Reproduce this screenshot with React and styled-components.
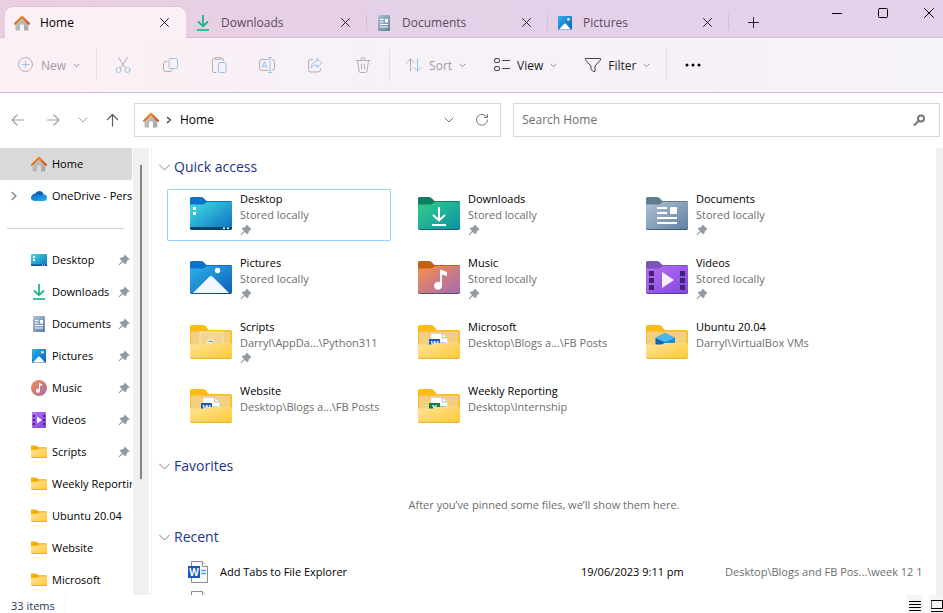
import { useState } from 'react'
import styled, { createGlobalStyle, css } from 'styled-components'

const GlobalStyle = createGlobalStyle`
  * {
    box-sizing: border-box;
  }

  body {
    margin: 0;
    background: #fff;
    color: #000;
    font-family: 'Open Sans', 'Noto Sans', sans-serif;
    font-size: 12px;
    line-height: 16px;
  }

  button,
  input {
    margin: 0;
    padding: 0;
    border: none;
    background: none;
    color: inherit;
    font: inherit;
  }

  svg {
    display: block;
    flex: none;
  }
`

const Window = styled.div`
  display: flex;
  flex-direction: column;
  height: 100vh;
  overflow: hidden;
`

/* Title bar */

const TitleBar = styled.header`
  display: flex;
  align-items: flex-end;
  justify-content: space-between;
  height: 38px;
  flex: none;
  padding-left: 5px;
  background: linear-gradient(90deg, #ebcfe0, #e4d1e8 45%, #e3d1ea);
  box-shadow: inset 0 -1px #d8bfdb;
`

const Tabs = styled.div`
  display: flex;
`

const Tab = styled.div`
  display: flex;
  align-items: center;
  gap: 10px;
  position: relative;
  width: 181px;
  height: 31px;
  padding: 0 13px 0 9px;
  color: #5c4b60;

  ${(props) =>
    props.$active
      ? css`
          border-radius: 8px 8px 0 0;
          background: #faf0f6;
          color: #000;
          box-shadow: 0 -1px 1px #dcc0d8;
        `
      : css`
          &::after {
            content: '';
            position: absolute;
            right: 0;
            top: 7px;
            height: 16px;
            border-right: 1px solid #d4bfd8;
          }
        `}
`

const TabLabel = styled.span`
  flex: 1;
`

const TabClose = styled.button`
  display: grid;
  place-items: center;
  width: 18px;
  height: 18px;
  color: #2b2030;
`

const NewTab = styled.button`
  display: grid;
  place-items: center;
  width: 48px;
  height: 31px;
  color: #2b2030;
`

const WindowControls = styled.div`
  display: flex;
  align-self: flex-start;
  margin-right: -9px;
`

const WindowButton = styled.button`
  display: grid;
  place-items: center;
  width: 46px;
  height: 26px;
`

/* Command bar */

const CommandBar = styled.div`
  display: flex;
  align-items: center;
  height: 55px;
  flex: none;
  padding-left: 4px;
  border-bottom: 1px solid #d5bedb;
  background: linear-gradient(90deg, #fbf0f5, #f7f1f8 45%, #f6f2f9);
`

const Command = styled.button`
  display: flex;
  align-items: center;
  gap: 7px;
  height: 32px;
  padding: 0 14px;
  color: ${(props) => (props.disabled ? '#a29ba3' : '#1b1b1b')};
`

const CommandLabel = styled.span`
  padding-top: 2px;
`

const IconCommand = styled.button`
  display: grid;
  place-items: center;
  width: 48px;
  height: 32px;
`

const Separator = styled.span`
  width: 1px;
  height: 32px;
  margin: 0 2px;
  background: #e5dde6;
`

/* Address row */

const AddressRow = styled.div`
  display: flex;
  align-items: center;
  gap: 12px;
  height: 55px;
  flex: none;
  padding: 0 3px 1px 10px;
`

const NavButtons = styled.nav`
  display: grid;
  grid-template-columns: 36px 32px 28px 16px;
  width: 112px;
`

const NavButton = styled.button`
  height: 24px;
  color: ${(props) => (props.$strong ? '#5c5c5c' : '#a0a0a0')};
`

const AddressBox = styled.div`
  display: flex;
  align-items: center;
  flex: 6;
  height: 34px;
  padding: 0 11px 0 8px;
  border: 1px solid #d9d9d9;
`

const Crumb = styled.a`
  flex: 1;
  color: inherit;
  text-decoration: none;
`

const CrumbArrow = styled.span`
  display: grid;
  place-items: center;
  width: 21px;
`

const BoxButton = styled.button`
  display: grid;
  place-items: center;
  width: 14px;
  height: 24px;
  margin-left: 19px;
  color: #757575;
`

const SearchBox = styled.label`
  display: flex;
  align-items: center;
  flex: 7;
  height: 34px;
  padding: 0 13px 0 8px;
  border: 1px solid #d9d9d9;
`

const SearchInput = styled.input`
  flex: 1;
  min-width: 0;
  outline: none;

  &::placeholder {
    color: #6d6d6d;
    opacity: 1;
  }
`

/* Body */

const Body = styled.div`
  display: flex;
  flex: 1;
  min-height: 0;
  font-size: 11px;
`

const Sidebar = styled.nav`
  width: 132px;
  flex: none;
  overflow: hidden;
`

const SideItem = styled.button`
  display: flex;
  align-items: center;
  width: 100%;
  height: 32px;
  padding-right: ${(props) => (props.$pinned ? '2px' : '0')};
  border-radius: 0 2px 2px 0;
  background: ${(props) => (props.$active ? '#d9d9d9' : 'none')};
  text-align: left;
`

const SideArrow = styled.span`
  display: grid;
  place-items: center;
  width: 27px;
  flex: none;
  margin-right: 4px;
  color: #858585;
`

const SideLabel = styled.span`
  flex: 1;
  margin-left: 5px;
  overflow: hidden;
  white-space: nowrap;
`

const SideDivider = styled.hr`
  height: 1px;
  margin: 16px 8px 15px 7px;
  border: none;
  background: #d4d4d4;
`

const ScrollTrack = styled.div`
  display: flex;
  justify-content: center;
  width: ${(props) => (props.$edge ? '7px' : '16px')};
  flex: none;
  margin-left: ${(props) => (props.$edge ? '0' : '1px')};
  padding-top: 17px;
  background: #f0f0f0;
`

const ScrollThumb = styled.div`
  width: 2px;
  height: 73%;
  background: #858585;
`

const Content = styled.main`
  flex: 1;
  min-width: 0;
  margin-left: 2px;
  padding-top: 3px;
  border-left: 1px solid #f2f2f2;
  overflow: hidden;
`

const SectionTitle = styled.h2`
  display: flex;
  align-items: center;
  gap: 4px;
  height: 32px;
  margin: 0;
  padding-left: 7px;
  color: #1e3287;
  font-size: 14px;
  font-weight: 400;
  line-height: 20px;
`

const Tiles = styled.div`
  display: grid;
  grid-template-columns: repeat(auto-fill, 224px);
  gap: 12px 4px;
  padding: 6px 0 17px 15px;
`

const Tile = styled.button`
  display: flex;
  gap: 7px;
  height: 52px;
  padding: 1px 0 0 22px;
  border: 1px solid ${(props) => (props.$selected ? '#99d1ff' : 'transparent')};
  border-radius: 1px;
  text-align: left;
  white-space: nowrap;
`

const TileIcon = styled.span`
  padding-top: 5px;
`

const TileText = styled.span`
  display: flex;
  flex-direction: column;
`

const Muted = styled.span`
  color: #6d6d6d;
`

const PinSlot = styled.span`
  padding-top: 1px;
`

const EmptyNote = styled.p`
  margin: 0;
  padding: 15px 0 8px;
  color: #6d6d6d;
  text-align: center;
`

const RecentTable = styled.table`
  width: 100%;
  margin-top: 4px;
  border-collapse: collapse;
  table-layout: fixed;
  white-space: nowrap;
`

const RecentCell = styled.td`
  width: ${(props) => props.$width || 'auto'};
  height: 30px;
  padding: 0;
  color: ${(props) => (props.$muted ? '#6d6d6d' : '#000')};
`

const FileName = styled.span`
  display: flex;
  align-items: center;
  gap: 12px;
  padding-left: 36px;
`

/* Status bar */

const StatusBar = styled.footer`
  display: flex;
  align-items: center;
  height: 18px;
  flex: none;
  color: #1e395b;
  font-size: 11px;
`

const StatusCount = styled.span`
  width: 66px;
  padding: 3px 0 0 11px;
  line-height: 15px;
  border-right: 1px solid #f2f2f2;
`

const ViewSwitch = styled.div`
  display: flex;
  gap: 6px;
  margin: 0 -2px 0 auto;
`

const ViewButton = styled.button`
  display: grid;
  place-items: center;
  width: 16px;
  height: 18px;
  padding-top: 3px;
  background: #f5f5f5;
`

/* Icons */

const gradients = {
  roof: ['#f59a1b', '#d5460e'],
  wall: ['#c9c9c9', '#a6a6a6'],
  desktop: ['#3fe0e0', '#0f6cc4'],
  downloads: ['#33cc8c', '#0a93a5'],
  documents: ['#afc2d8', '#5f7f9f'],
  pictures: ['#2fb1ec', '#0a5fb8'],
  music: ['#f9904b', '#a468b4'],
  videos: ['#b76df5', '#8246e0'],
  yellow: ['#ffe59a', '#ffc830'],
  cloud: ['#0a6ac0', '#29b0f2'],
}

function Gradients() {
  return (
    <svg width="0" height="0" style={{ position: 'absolute' }} aria-hidden="true">
      <defs>
        {Object.entries(gradients).map(([id, [from, to]]) => (
          <linearGradient key={id} id={id} x1="0" y1="0" x2="1" y2="1">
            <stop stopColor={from} />
            <stop offset="1" stopColor={to} />
          </linearGradient>
        ))}
      </defs>
    </svg>
  )
}

function Line({ w = 16, h = w, d, color = 'currentColor', width = 1, children }) {
  return (
    <svg width={w} height={h} viewBox={`0 0 ${w} ${h}`} fill="none" stroke={color} strokeWidth={width} strokeLinecap="round" strokeLinejoin="round" aria-hidden="true">
      {d && <path d={d} />}
      {children}
    </svg>
  )
}

const SmallChevron = () => <Line w={7} color="#8f8a90" d="M1 2.200L3.500 4.700L6 2.200" />
const TitleChevron = () => <Line w={11} color="#858585" d="M.5 3L5.500 8L10.500 3" />
const Cross = ({ size = 10 }) => <Line w={size} d={`M.5 .5L${size - 0.5} ${size - 0.5}M${size - 0.5} .5L.5 ${size - 0.5}`} />

function HomeIcon() {
  return (
    <svg width="16" height="16" viewBox="0 0 16 16" aria-hidden="true">
      <path d="M8 2L14.300 8V14.600Q14.300 15.500 13.400 15.500H10V10.500Q10 9.500 9 9.500H7Q6 9.500 6 10.500V15.500H2.300Q1.500 15.500 1.500 14.600V8Z" fill="url(#wall)" />
      <path d="M1 8.800L8 1.700L15 8.800" fill="none" stroke="url(#roof)" strokeWidth="2" strokeLinecap="round" strokeLinejoin="round" />
    </svg>
  )
}

function PinIcon() {
  return (
    <svg width="12" height="12" viewBox="0 0 12 12" fill="#929ba3" aria-hidden="true">
      <path d="M6.600 .5L11.500 5.200L10.300 6.200L9.200 6.500L8.300 9.500L7.200 10.300L4.800 7.900L1.400 11.200L.7 11.100L.7 10.400L4 7L1.700 4.800L2.500 3.800L5.500 3Z" />
    </svg>
  )
}

function SmallIcon({ kind }) {
  return (
    <svg width="16" height="16" viewBox="0 0 16 16" aria-hidden="true">
      {kind === 'desktop' && (
        <>
          <rect y="2" width="16" height="12" rx="1" fill="url(#desktop)" />
          <path d="M0 12.500H16V13Q16 14 15 14H1Q0 14 0 13Z" fill="#0b4f80" />
          <path d="M2 4h2v2H2zM2 7h2v2H2zM11 12.700h1v1h-1zM13 12.700h1v1h-1z" fill="#fff" />
        </>
      )}
      {kind === 'downloads' && (
        <>
          <path d="M8 0V11M3 6.500L8 11.200L13 6.500" fill="none" stroke="#1fb48f" strokeWidth="1.800" />
          <path d="M2 15H14" stroke="#1fbe8c" strokeWidth="1.800" />
        </>
      )}
      {kind === 'documents' && (
        <>
          <rect x="2" width="12" height="16" rx="1" fill="url(#documents)" />
          <path d="M4 4.500H7.500M4 7H7.500M4 9.500H12M4 12H12" stroke="#fff" strokeWidth="1.200" />
          <path d="M9 4h3v3.500H9z" fill="#fff" />
        </>
      )}
      {kind === 'pictures' && (
        <>
          <rect x="1" y="1" width="14" height="14" rx="1" fill="url(#pictures)" />
          <path d="M2 14.500L7.200 8.800Q8 8 8.800 8.800L14 14.500Z" fill="#fff" />
          <circle cx="11.500" cy="4.300" r="1.300" fill="#fff" />
        </>
      )}
      {kind === 'music' && (
        <>
          <circle cx="8" cy="8" r="8" fill="url(#music)" />
          <path d="M8 3L11 4.300V6L9 5.300V10.500A2 2 0 1 1 8 9Z" fill="#fff" />
        </>
      )}
      {kind === 'videos' && (
        <>
          <rect x="1" width="14" height="16" rx="1" fill="url(#videos)" />
          <path d="M2 3h2v2H2zM2 7h2v2H2zM2 11h2v2H2zM12 3h2v2h-2zM12 7h2v2h-2zM12 11h2v2h-2z" fill="#43267e" />
          <path d="M6 4.500L11 8L6 11.500Z" fill="#fff" />
        </>
      )}
      {kind === 'folder' && (
        <>
          <path d="M0 2.500Q0 1.500 1 1.500H5.500L7.500 3.300H15Q16 3.300 16 4.300V8H0Z" fill="#f5ad0c" />
          <path d="M0 6H6L8 4.400H16V13Q16 14 15 14H1Q0 14 0 13Z" fill="url(#yellow)" />
          <path d="M.5 13.500H15.500" stroke="#e6a91f" strokeWidth=".8" />
        </>
      )}
      {kind === 'cloud' && (
        <>
          <path d="M4 11Q1 11 1 8.500Q1.200 6 4 5.800Q5.500 3 8.300 3Q11.500 3 12.500 6L12 9Z" fill="#0a5fb4" />
          <path d="M4.500 6.500Q7 5.500 9 7.500L13 6.200Q16 7 16 9.800Q15.800 13 12.800 13H3.800Q0 12.800 0 9.600Q.3 6.800 3.500 6.300Z" fill="url(#cloud)" />
        </>
      )}
    </svg>
  )
}

const tabColors = {
  desktop: '#0a72cc',
  pictures: '#0a72cc',
  downloads: '#0b7f5f',
  documents: '#5f7d8c',
  music: '#c2620f',
  videos: '#7c55b8',
}

function ColorFolder({ kind }) {
  return (
    <svg width="43" height="36" viewBox="0 0 43 36" aria-hidden="true">
      <path d="M0 2.500Q0 1 1.500 1H11Q13 1 14.500 3L16.500 5H41Q42 5 42 6.500V14H0Z" fill={tabColors[kind]} />
      <path d="M0 8.500H12.500Q14 8.500 15 7.500L17 6H42V32Q42 34 40 34H2Q0 34 0 32Z" fill={`url(#${kind})`} />
      <path d="M.3 32.200Q.6 33.500 2 33.500H40Q41.400 33.500 41.700 32.200" fill="none" stroke="#12355b" strokeOpacity=".6" />
      {kind === 'desktop' && (
        <>
          <path d="M0 31H42V32Q42 34 40 34H2Q0 34 0 32Z" fill="#0b4568" />
          <path d="M3 11h3v3H3zM3 16h3v3H3zM33 31.500h2v1.500h-2zM37 31.500h2v1.500h-2z" fill="#fff" />
        </>
      )}
      {kind === 'downloads' && <path d="M21 11V24M15 19L21 24.500L27 19M14 29H28" fill="none" stroke="#fff" strokeWidth="2" />}
      {kind === 'documents' && (
        <>
          <path d="M11 12H21M11 17H21M11 22H31M11 27H31" stroke="#fff" strokeWidth="2" />
          <rect x="24" y="11" width="7" height="7" rx="1" fill="#fff" />
        </>
      )}
      {kind === 'pictures' && (
        <>
          <path d="M3 33L19 17Q21 15 23 17L39 33Z" fill="#f0f7ff" />
          <circle cx="27.500" cy="10.500" r="2.700" fill="#fff" />
        </>
      )}
      {kind === 'music' && <path d="M22 9.500L29 12V16L24 14.500V26A4 4 0 1 1 22 22.300Z" fill="#fff" />}
      {kind === 'videos' && (
        <>
          <path d="M3 11h5v5H3zM3 18h5v5H3zM3 25h5v5H3zM34 11h5v5h-5zM34 18h5v5h-5zM34 25h5v5h-5z" fill="#3d2470" />
          <path d="M16 12L28 20L16 28Z" fill="#f4effa" />
        </>
      )}
    </svg>
  )
}

function YellowFolder({ inside }) {
  const letter = inside === 'excel' ? 'X' : 'W'
  return (
    <svg width="43" height="36" viewBox="0 0 43 36" aria-hidden="true">
      <path d="M0 3Q0 1 2 1H13Q15 1 16 2.500L18.500 6H40Q42 6 42 8V24H0Z" fill="#fcbb17" />
      <path d="M1 9Q1 7.500 2.500 7.500H40.500V24H1Z" fill="#f3cf80" />
      {inside === 'script' && (
        <>
          <path d="M10 8h23v14H10z" fill="#f4d591" stroke="#f9e3b4" />
          <circle cx="20.500" cy="18.500" r="3.200" fill="#f5f5f5" />
          <path d="M18.500 17.500l2.500-.5 2 1.500" fill="none" stroke="#54708c" />
        </>
      )}
      {(inside === 'word' || inside === 'excel') && (
        <>
          <path d="M13 9.500H24.500L29.500 14V24H13Z" fill="#fff" stroke="#c9cdd3" strokeWidth=".6" />
          <path d="M24.500 9.500V14H29.500" fill="none" stroke="#b4bac1" />
          <path d="M21 19.500H28" stroke={inside === 'excel' ? '#2a8f58' : '#6c9ddc'} strokeWidth="2" />
          <rect x="11" y="15" width="11" height="9" rx=".5" fill={inside === 'excel' ? '#107c41' : '#185abd'} />
          <text x="16.500" y="23" fill="#fff" fontSize="8" fontWeight="700" textAnchor="middle">
            {letter}
          </text>
        </>
      )}
      {inside === 'box' && (
        <>
          <path d="M9.500 14L19 9L29 14V22H9.500Z" fill="#0a62b5" />
          <path d="M9.500 14L19 9L29 14L19 18.500Z" fill="#45b9f4" />
          <path d="M19 18.500L29 14V22H15Z" fill="#1b8be0" />
        </>
      )}
      <path d="M0 20.500H15.500L18.500 19H42V33Q42 35 40 35H2Q0 35 0 33Z" fill="url(#yellow)" />
      <path d="M.5 33Q.8 34.500 2 34.500H40Q41.200 34.500 41.500 33" fill="none" stroke="#e4ab32" strokeWidth=".8" />
    </svg>
  )
}

function WordIcon() {
  return (
    <svg width="20" height="24" viewBox="0 0 20 24" aria-hidden="true">
      <path d="M3.500 1.500H14.500L19.500 6.500V22.500H3.500Z" fill="#fafafa" stroke="#8c8c8c" />
      <path d="M14.500 1.500V6.500H19.500" fill="#fff" stroke="#8c8c8c" />
      <path d="M13 10.500H18M13 13.500H18" stroke="#54a0ea" strokeWidth="1.500" />
      <rect y="6" width="12" height="12" fill="#185abd" />
      <text x="6" y="16" fill="#fff" fontSize="10" fontWeight="700" textAnchor="middle">
        W
      </text>
    </svg>
  )
}

const tabs = ['Home', 'Downloads', 'Documents', 'Pictures']

const places = [
  { label: 'Desktop', icon: 'desktop', pinned: true },
  { label: 'Downloads', icon: 'downloads', pinned: true },
  { label: 'Documents', icon: 'documents', pinned: true },
  { label: 'Pictures', icon: 'pictures', pinned: true },
  { label: 'Music', icon: 'music', pinned: true },
  { label: 'Videos', icon: 'videos', pinned: true },
  { label: 'Scripts', icon: 'folder', pinned: true },
  { label: 'Weekly Reporting', icon: 'folder' },
  { label: 'Ubuntu 20.04', icon: 'folder' },
  { label: 'Website', icon: 'folder' },
  { label: 'Microsoft', icon: 'folder' },
]

const folders = [
  { name: 'Desktop', path: 'Stored locally', kind: 'desktop', pinned: true },
  { name: 'Downloads', path: 'Stored locally', kind: 'downloads', pinned: true },
  { name: 'Documents', path: 'Stored locally', kind: 'documents', pinned: true },
  { name: 'Pictures', path: 'Stored locally', kind: 'pictures', pinned: true },
  { name: 'Music', path: 'Stored locally', kind: 'music', pinned: true },
  { name: 'Videos', path: 'Stored locally', kind: 'videos', pinned: true },
  { name: 'Scripts', path: 'Darryl\\AppDa...\\Python311', inside: 'script', pinned: true },
  { name: 'Microsoft', path: 'Desktop\\Blogs a...\\FB Posts', inside: 'word' },
  { name: 'Ubuntu 20.04', path: 'Darryl\\VirtualBox VMs', inside: 'box' },
  { name: 'Website', path: 'Desktop\\Blogs a...\\FB Posts', inside: 'word' },
  { name: 'Weekly Reporting', path: 'Desktop\\Internship', inside: 'excel' },
]

function Commands() {
  const grey = '#b5adb6'
  const blue = '#94c4ea'
  return (
    <CommandBar>
      <Command disabled>
        <Line color={grey}>
          <circle cx="7.500" cy="7.500" r="7" />
          <path d="M7.500 4V11M4 7.500H11" stroke={blue} />
        </Line>
        <CommandLabel>New</CommandLabel>
        <SmallChevron />
      </Command>
      <Separator />
      <IconCommand disabled aria-label="Cut">
        <Line color={grey} d="M3.500 .5L10.500 11M12.500 .5L5.500 11">
          <circle cx="3.500" cy="13" r="2.500" stroke={blue} />
          <circle cx="12.500" cy="13" r="2.500" stroke={blue} />
        </Line>
      </IconCommand>
      <IconCommand disabled aria-label="Copy">
        <Line color={grey} d="M4 4.500H3Q.5 4.500 .5 7V12Q.5 14.500 3 14.500H7Q9 14.500 9.500 12.500">
          <rect x="6" y="1.500" width="8.500" height="10" rx="2" stroke={blue} />
        </Line>
      </IconCommand>
      <IconCommand disabled aria-label="Paste">
        <Line color={grey} d="M5 15.500H3Q1.500 15.500 1.500 14V3Q1.500 1.500 3 1.500H4.500M10 1.500H11Q12.500 1.500 12.500 3V4M5 .5H9.500V2.500H5Z">
          <rect x="7.500" y="5.500" width="7.500" height="10" rx="1.500" stroke={blue} />
        </Line>
      </IconCommand>
      <IconCommand disabled aria-label="Rename">
        <Line color={grey} d="M9 13.500H3Q.5 13.500 .5 11V5Q.5 2.500 3 2.500H9M13 2.500Q15.500 2.500 15.500 5V11Q15.500 13.500 13 13.500">
          <path d="M3 11L5.500 4.500L8 11M4 9H7M11 .5V15.500M9.500 .5H12.500M9.500 15.500H12.500" stroke={blue} />
        </Line>
      </IconCommand>
      <IconCommand disabled aria-label="Share">
        <Line color={grey} d="M6 2.500H4Q1.500 2.500 1.500 5V12.500Q1.500 15 4 15H11Q13.500 15 13.500 12.500V11.500">
          <path d="M10 1.500L15 6L10 10.500V8Q6 8 4 11Q4.500 5 10 4Z" stroke={blue} />
        </Line>
      </IconCommand>
      <IconCommand disabled aria-label="Delete">
        <Line color={grey} d="M1 3.500H15M2.500 3.500L4 14Q4.200 15.500 5.500 15.500H10.500Q11.800 15.500 12 14L13.500 3.500M6 3V2Q6 .8 7 .8H9Q10 .8 10 2V3M6.500 7V12M9.500 7V12" />
      </IconCommand>
      <Separator />
      <Command disabled>
        <Line color={grey} d="M4.500 14V2M.5 6L4.500 2L8.500 6">
          <path d="M11.500 2V14M7.500 10L11.500 14L15.500 10" stroke={blue} />
        </Line>
        <CommandLabel>Sort</CommandLabel>
        <SmallChevron />
      </Command>
      <Command>
        <Line d="M8.500 3.500H15.500M8.500 11.500H15.500" color="#444">
          <rect x=".5" y="1.500" width="5" height="4" rx="1.500" />
          <rect x=".5" y="9.500" width="5" height="4" rx="1.500" />
        </Line>
        <CommandLabel>View</CommandLabel>
        <SmallChevron />
      </Command>
      <Command>
        <Line d="M.5 1.500H15.500V3L10 9V14.500H8.500L6 12.500V9L.5 3Z" color="#444" />
        <CommandLabel>Filter</CommandLabel>
        <SmallChevron />
      </Command>
      <Separator />
      <IconCommand aria-label="See more">
        <svg width="18" height="4" viewBox="0 0 18 4" aria-hidden="true">
          <circle cx="3" cy="2" r="1.500" />
          <circle cx="9" cy="2" r="1.500" />
          <circle cx="15" cy="2" r="1.500" />
        </svg>
      </IconCommand>
    </CommandBar>
  )
}

function App() {
  const [activeTab, setActiveTab] = useState('Home')
  const [selected, setSelected] = useState('Desktop')
  const [search, setSearch] = useState('')

  return (
    <Window>
      <GlobalStyle />
      <Gradients />
      <TitleBar>
        <Tabs role="tablist">
          {tabs.map((tab) => (
            <Tab key={tab} role="tab" aria-selected={tab === activeTab} $active={tab === activeTab} onClick={() => setActiveTab(tab)}>
              {tab === 'Home' ? <HomeIcon /> : <SmallIcon kind={tab.toLowerCase()} />}
              <TabLabel>{tab}</TabLabel>
              <TabClose aria-label={`Close ${tab}`}>
                <Cross size={9} />
              </TabClose>
            </Tab>
          ))}
          <NewTab aria-label="New tab">
            <Line w={11} d="M5.500 .5V10.500M.5 5.500H10.500" />
          </NewTab>
        </Tabs>
        <WindowControls>
          <WindowButton aria-label="Minimise">
            <Line w={10} h={10} d="M.5 5.500H9.500" />
          </WindowButton>
          <WindowButton aria-label="Maximise">
            <Line w={10} h={10}>
              <rect x=".5" y=".5" width="9" height="9" rx="1" />
            </Line>
          </WindowButton>
          <WindowButton aria-label="Close">
            <Cross />
          </WindowButton>
        </WindowControls>
      </TitleBar>

      <Commands />

      <AddressRow>
        <NavButtons>
          <NavButton aria-label="Back">
            <Line d="M2 8H13.500M7 3L2 8L7 13" width={1.2} />
          </NavButton>
          <NavButton aria-label="Forward">
            <Line d="M1.500 8H13M8 3L13 8L8 13" width={1.2} />
          </NavButton>
          <NavButton aria-label="Recent locations">
            <Line w={10} h={10} d="M1 3L5 7L9 3" />
          </NavButton>
          <NavButton aria-label="Up" $strong>
            <Line d="M6.500 14V2.500M1.500 7.500L6.500 2.500L11.500 7.500" width={1.2} />
          </NavButton>
        </NavButtons>
        <AddressBox>
          <HomeIcon />
          <CrumbArrow>
            <Line w={8} h={8} d="M1.500 1.500L4.500 4L1.500 6.500" color="#444" width={1.5} />
          </CrumbArrow>
          <Crumb href="#home">Home</Crumb>
          <BoxButton aria-label="Previous locations">
            <Line w={10} h={10} d="M1 3L5 7L9 3" />
          </BoxButton>
          <BoxButton aria-label="Refresh">
            <Line w={14} h={14} d="M12 4.500A5.500 5.500 0 1 0 12.500 7M12.500 1.500V4.500H9.500" />
          </BoxButton>
        </AddressBox>
        <SearchBox>
          <SearchInput type="search" placeholder="Search Home" aria-label="Search Home" value={search} onChange={(e) => setSearch(e.target.value)} />
          <Line w={13} h={13} color="#757575" width={2}>
            <circle cx="8" cy="4.500" r="3" />
            <path d="M5.500 7L1.500 11" />
          </Line>
        </SearchBox>
      </AddressRow>

      <Body>
        <Sidebar aria-label="Places">
          <SideItem $active>
            <SideArrow />
            <HomeIcon />
            <SideLabel>Home</SideLabel>
          </SideItem>
          <SideItem>
            <SideArrow>
              <Line w={8} h={10} d="M2 1.500L6 5L2 8.500" width={1.5} />
            </SideArrow>
            <SmallIcon kind="cloud" />
            <SideLabel>OneDrive - Personal</SideLabel>
          </SideItem>
          <SideDivider />
          {places.map((place) => (
            <SideItem key={place.label} $pinned={place.pinned}>
              <SideArrow />
              <SmallIcon kind={place.icon} />
              <SideLabel>{place.label}</SideLabel>
              {place.pinned && <PinIcon />}
            </SideItem>
          ))}
        </Sidebar>
        <ScrollTrack>
          <ScrollThumb />
        </ScrollTrack>

        <Content>
          <SectionTitle>
            <TitleChevron />
            Quick access
          </SectionTitle>
          <Tiles>
            {folders.map((folder) => (
              <Tile key={folder.name} $selected={folder.name === selected} onClick={() => setSelected(folder.name)}>
                <TileIcon>{folder.kind ? <ColorFolder kind={folder.kind} /> : <YellowFolder inside={folder.inside} />}</TileIcon>
                <TileText>
                  <span>{folder.name}</span>
                  <Muted>{folder.path}</Muted>
                  {folder.pinned && (
                    <PinSlot>
                      <PinIcon />
                    </PinSlot>
                  )}
                </TileText>
              </Tile>
            ))}
          </Tiles>

          <SectionTitle>
            <TitleChevron />
            Favorites
          </SectionTitle>
          <EmptyNote>After you’ve pinned some files, we’ll show them here.</EmptyNote>

          <SectionTitle>
            <TitleChevron />
            Recent
          </SectionTitle>
          <RecentTable>
            <tbody>
              <tr>
                <RecentCell>
                  <FileName>
                    <WordIcon />
                    Add Tabs to File Explorer
                  </FileName>
                </RecentCell>
                <RecentCell $width="144px">19/06/2023 9:11 pm</RecentCell>
                <RecentCell $width="211px" $muted>
                  Desktop\Blogs and FB Pos...\week 12 1
                </RecentCell>
              </tr>
              <tr>
                <RecentCell>
                  <FileName>
                    <WordIcon />
                  </FileName>
                </RecentCell>
              </tr>
            </tbody>
          </RecentTable>
        </Content>
        <ScrollTrack $edge />
      </Body>

      <StatusBar>
        <StatusCount>33 items</StatusCount>
        <ViewSwitch>
          <ViewButton aria-label="Details view">
            <Line w={12} h={12} color="#000" d="M.5 1.500H11.500M.5 4.500H11.500M.5 7.500H11.500M.5 10.500H11.500" />
          </ViewButton>
          <ViewButton aria-label="Large icons view">
            <Line w={12} h={12} color="#000" d="M.5 .5H11.500V8.500H.5ZM.5 11.500H11.500" />
          </ViewButton>
        </ViewSwitch>
      </StatusBar>
    </Window>
  )
}

export default App
